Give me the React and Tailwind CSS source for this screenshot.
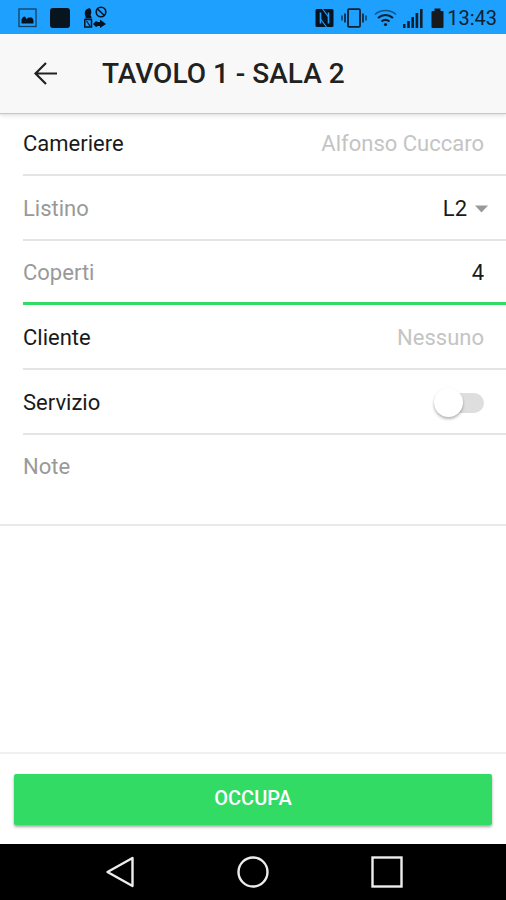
import { useState } from 'react';

const StatusBar = () => (
  <div className="flex h-[34px] shrink-0 items-center justify-between bg-[#1ea0ff] pt-px pr-[9px] pl-[18px] text-[#10202e]">
    <div className="flex items-center gap-3">
      <svg width="19" height="20" viewBox="0 0 19 20" fill="none">
        <rect x="1" y="1" width="17" height="17.5" stroke="currentColor" strokeOpacity="0.75" strokeWidth="1.3" />
        <path d="M3.5 15.500V11.500L5 9l2-.5 1.500 2.500 2-1.500h3.500l1.500 2.500v3.500z" fill="#06131f" />
      </svg>
      <svg width="22" height="22" viewBox="0 0 22 22">
        <rect x="1" y="1" width="20" height="20" rx="3" fill="#08151e" />
      </svg>
      <svg width="25" height="24" viewBox="0 0 25 24" fill="#06131f">
        <path d="M6.500 2c1 .5 1.800 2 1.800 4 0 1.500-.4 2.500-.8 3l1 2v1.500H2.500V10.500C1.500 9 1.500 6 2.500 4.500S5 3 6.500 2z" />
        <circle cx="18" cy="6" r="4.800" fill="none" stroke="#06131f" strokeWidth="1.600" />
        <path d="M14.500 3l7 6.500" stroke="#06131f" strokeWidth="1.600" />
        <rect x="1.800" y="13.500" width="6.700" height="7.500" fill="none" stroke="#06131f" strokeWidth="1.500" />
        <path d="M3.500 15l3.500 5" stroke="#06131f" strokeWidth="1.300" />
        <path d="M10 18l3-3 2 1h2v-2.500l6 4.500-6 4V20h-2l-2 1z" />
      </svg>
    </div>

    <div className="flex items-center">
      <div className="flex items-center gap-[6px]">
        <svg width="19" height="20" viewBox="0 0 19 20" fill="none">
          <rect x="0.500" y="1" width="18" height="18" rx="1.500" fill="#06131f" />
          <path d="M5.500 15.500V4.500" stroke="#1ea0ff" strokeWidth="1.600" />
          <path d="M13.500 4.500v11" stroke="#1ea0ff" strokeWidth="1.600" />
          <path d="M7.500 1l6 8M5.500 11l6 8" stroke="#1ea0ff" strokeWidth="1.200" />
        </svg>
        <svg width="28" height="20" viewBox="0 0 28 20" fill="none" stroke="currentColor">
          <rect x="8" y="1.200" width="12" height="17.600" rx="1" strokeWidth="1.800" />
          <path d="M5 5.500v9M23 5.500v9" strokeWidth="1.600" />
          <path d="M2 7.500v5M26 7.500v5" strokeWidth="1.200" />
        </svg>
        <svg width="23" height="20" viewBox="0 0 23 20" fill="none" stroke="currentColor">
          <path d="M1 6.500c6-5.300 15-5.300 21 0" strokeWidth="1.600" strokeOpacity="0.6" />
          <path d="M4 10c4.500-4 10.500-4 15 0" strokeWidth="2.200" />
          <path d="M7.500 13.500c2.500-2 5.500-2 8 0" strokeWidth="2.200" />
          <circle cx="11.500" cy="16.500" r="1.600" fill="currentColor" stroke="none" />
        </svg>
        <svg width="20" height="20" viewBox="0 0 20 20" fill="currentColor">
          <path d="M0 16h2.500v4H0zM4.200 13h2.600v7H4.200zM8.400 9h2.600v11H8.400zM12.600 5h2.600v15h-2.600zM17 1h2.600v19H17z" />
        </svg>
        <svg width="18" height="20" viewBox="0 0 18 20" fill="#17191c">
          <path d="M5.500 .5h6V3h2a1 1 0 011 1v15a1 1 0 01-1 1h-10a1 1 0 01-1-1V4a1 1 0 011-1h2z" />
        </svg>
      </div>
      <span className="text-xl leading-6">13:43</span>
    </div>
  </div>
);

const Header = ({ title }) => (
  <header className="z-10 flex h-[77px] shrink-0 items-center gap-8 border-[#f8f8f8] bg-[#f8f8f8] pt-[2px] pl-[30px] shadow-[0_2px_0_#f8f8f8,0_3px_1px_#c8c8c8,0_5px_4px_rgba(0,0,0,0.1)]">
    <button type="button" aria-label="Indietro" className="flex w-10 items-center">
      <svg width="30" height="30" viewBox="0 0 30 30" fill="none" stroke="#222" strokeWidth="2.200">
        <path d="M27 14.500H6M16 4L5.500 14.500 16 25" />
      </svg>
    </button>
    <h1 className="text-[28px] leading-8 font-medium text-[#212121]">{title}</h1>
  </header>
);

const ROW = 'flex h-[65px] items-center justify-between border-b-2 border-[#e4e4e4] pt-[2px] pr-[22px]';

const NavigationBar = () => (
  <nav className="flex h-14 shrink-0 items-center justify-center gap-[102px] bg-black text-[#ededed]">
    <button type="button" aria-label="Back">
      <svg width="32" height="32" viewBox="0 0 32 32" fill="none" stroke="currentColor" strokeWidth="2.400">
        <path d="M29.500 2L4.500 16l25 14z" strokeLinejoin="round" />
      </svg>
    </button>
    <button type="button" aria-label="Home">
      <svg width="32" height="32" viewBox="0 0 32 32" fill="none" stroke="currentColor" strokeWidth="2.400">
        <circle cx="16" cy="16" r="14.500" />
      </svg>
    </button>
    <button type="button" aria-label="Recent">
      <svg width="32" height="32" viewBox="0 0 32 32" fill="none" stroke="currentColor" strokeWidth="2.400">
        <rect x="1.500" y="1.500" width="29" height="29" />
      </svg>
    </button>
  </nav>
);

export default function App() {
  const [listino, setListino] = useState('L2');
  const [coperti, setCoperti] = useState('4');
  const [servizio, setServizio] = useState(false);
  const [note, setNote] = useState('');

  return (
    <div className="flex min-h-screen flex-col bg-white font-[Roboto,sans-serif] text-[22px] leading-7 text-[#1a1a1a]">
      <StatusBar />
      <Header title="TAVOLO 1 - SALA 2" />

      <main className="flex-1">
        <form className="border-b-2 border-[#e9e9e9] pl-[23px]">
          <div className={ROW}>
            <span>Cameriere</span>
            <span className="text-[#c4c4c4]">Alfonso Cuccaro</span>
          </div>

          <div className={ROW}>
            <label htmlFor="listino" className="text-[#999]">Listino</label>
            <div className="-mr-1 flex items-center gap-2">
              <select
                id="listino"
                value={listino}
                onChange={(e) => setListino(e.target.value)}
                className="appearance-none bg-transparent text-right outline-none [field-sizing:content]"
              >
                <option>L1</option>
                <option>L2</option>
              </select>
              <svg width="13" height="8" viewBox="0 0 13 8" fill="#999">
                <path d="M0 .5h13L6.500 7.500z" />
              </svg>
            </div>
          </div>

          <div className="flex h-16 items-center justify-between border-b-[3px] border-[#32db64] pt-[2px] pr-[22px]">
            <label htmlFor="coperti" className="text-[#999]">Coperti</label>
            <input
              id="coperti"
              inputMode="numeric"
              value={coperti}
              onChange={(e) => setCoperti(e.target.value)}
              className="w-32 bg-transparent text-right outline-none"
            />
          </div>

          <div className={ROW}>
            <span>Cliente</span>
            <span className="text-[#c4c4c4]">Nessuno</span>
          </div>

          <div className={ROW}>
            <label htmlFor="servizio">Servizio</label>
            <input
              id="servizio"
              type="checkbox"
              role="switch"
              checked={servizio}
              onChange={(e) => setServizio(e.target.checked)}
              className="flex h-5 w-[50px] appearance-none items-center rounded-full bg-[#dedede] before:size-[29px] before:shrink-0 before:rounded-full before:bg-white before:shadow-[0_2px_3px_rgba(0,0,0,0.3)] checked:justify-end checked:bg-[#32db64]"
            />
          </div>

          <div className="flex items-start pt-[18px] pr-[22px] pb-[15px]">
            <label htmlFor="note" className="text-[#999]">Note</label>
            <textarea
              id="note"
              rows="2"
              value={note}
              onChange={(e) => setNote(e.target.value)}
              className="ml-4 block flex-1 resize-none bg-transparent outline-none"
            />
          </div>
        </form>
      </main>

      <footer className="border-t-2 border-[#f0f0f0] px-[14px] pt-5 pb-[19px]">
        <button
          type="button"
          className="h-[51px] w-full rounded-[2px] bg-[#32db64] pb-[3px] text-[20px] font-medium text-white shadow-[0_2px_3px_rgba(0,0,0,0.35)]"
        >
          OCCUPA
        </button>
      </footer>

      <NavigationBar />
    </div>
  );
}
